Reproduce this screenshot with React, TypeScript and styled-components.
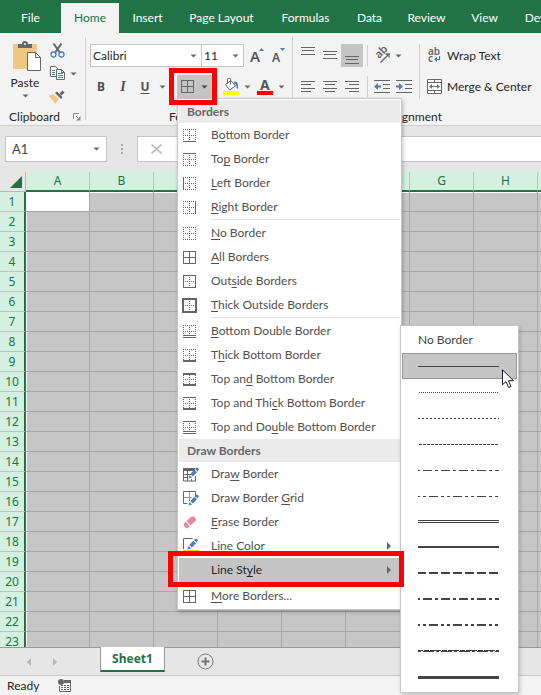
import React, { ReactNode } from "react";
import styled, { createGlobalStyle, css } from "styled-components";

const green = "#217346";
const ink = "#666666";
const blue = "#4a7ebb";

const GlobalStyle = createGlobalStyle`
  *, *::before, *::after { box-sizing: border-box; }
  body { margin: 0; overflow: hidden; }
  body, button, input, select {
    font-family: Lato, "Open Sans", sans-serif;
    font-size: 12px;
    line-height: 16px;
    color: #262626;
  }
  button, input, select { border: 0; margin: 0; padding: 0; background: transparent; outline: 0; }
  svg { display: block; flex: none; }
`;

const Window = styled.div`
  display: flex;
  flex-direction: column;
  height: 100vh;
  overflow: hidden;
  background: #e6e6e6;
`;

/* Tabs */

const TabStrip = styled.nav`
  display: flex;
  flex: none;
  height: 33px;
  padding-top: 3px;
  overflow: hidden;
  background: ${green};
`;

const RibbonTab = styled.button<{ $width: number; $active?: boolean }>`
  flex: none;
  width: ${(p) => p.$width}px;
  white-space: nowrap;
  color: ${(p) => (p.$active ? green : "#ffffff")};
  background: ${(p) => (p.$active ? "#f3f3f3" : "transparent")};
`;

/* Ribbon */

const Ribbon = styled.div`
  display: flex;
  flex: none;
  height: 93px;
  background: #f3f3f3;
  border-bottom: 1px solid #cfcfcf;
`;

const Group = styled.section<{ $width: number; $top?: number }>`
  position: relative;
  display: flex;
  flex: none;
  flex-direction: column;
  width: ${(p) => p.$width}px;
  padding: ${(p) => p.$top ?? 11}px 4px 0;
`;

const GroupDivider = styled.div`
  flex: none;
  width: 1px;
  margin: 4px 0 5px;
  background: #d2d2d2;
`;

const GroupFooter = styled.div`
  display: flex;
  align-items: center;
  height: 16px;
  margin-top: auto;
`;

const GroupTitle = styled.span`
  flex: 1;
  text-align: center;
`;

const Rows = styled.div`
  display: flex;
  flex-direction: column;
  gap: 8px;
`;

const Row = styled.div`
  display: flex;
  align-items: center;
  height: 23px;
`;

const Columns = styled.div`
  display: flex;
`;

const ToolButton = styled.button<{ $width?: number; $gap?: number; $pressed?: boolean }>`
  display: flex;
  flex: none;
  align-items: center;
  justify-content: center;
  gap: ${(p) => p.$gap ?? 4}px;
  width: ${(p) => p.$width ?? 22}px;
  height: 23px;
  background: ${(p) => (p.$pressed ? "#c5c5c5" : "transparent")};
`;

const Glyph = styled.span<{ $kind: "bold" | "italic" | "underline" }>`
  color: #505050;
  font-family: "Noto Sans", sans-serif;
  font-size: 12px;
  font-weight: 700;
  ${(p) =>
    p.$kind === "italic" &&
    css`
      font-family: "Liberation Serif", serif;
      font-style: italic;
      font-size: 14px;
    `}
  ${(p) =>
    p.$kind === "underline" &&
    css`
      text-decoration: underline;
      text-underline-offset: 2px;
    `}
`;

const LabelButton = styled.button`
  display: flex;
  align-items: center;
  gap: 5px;
  height: 23px;
  padding: 0 4px;
  white-space: nowrap;
`;

const PasteButton = styled.button`
  display: flex;
  flex-direction: column;
  align-items: center;
  width: 42px;
  gap: 3px;
`;

const ClipboardTools = styled.div`
  display: flex;
  flex-direction: column;
  align-items: flex-start;
  margin-top: -2px;
`;

const Combo = styled.label<{ $width: number }>`
  position: relative;
  display: block;
  flex: none;
  width: ${(p) => p.$width}px;
  height: 23px;
  border: 1px solid #c6c6c6;
  background: #ffffff;
  & + & { margin-left: -1px; }
`;

const ComboSelect = styled.select`
  appearance: none;
  display: block;
  width: 100%;
  height: 21px;
  padding: 0 18px 0 2px;
`;

const ComboCaret = styled.span`
  position: absolute;
  right: 4px;
  top: 9px;
  pointer-events: none;
`;

const Spacer = styled.span<{ $width: number }>`
  flex: none;
  width: ${(p) => p.$width}px;
`;

const Divider = styled.span<{ $height: number }>`
  flex: none;
  width: 1px;
  height: ${(p) => p.$height}px;
  margin: 0 3px 0 4px;
  background: #d2d2d2;
`;

const MenuAnchor = styled.div`
  position: relative;
  z-index: 5;
`;

const Callout = styled.span<{ $inset: string }>`
  position: absolute;
  inset: ${(p) => p.$inset};
  z-index: 3;
  border: 5px solid #ff0000;
  pointer-events: none;
`;

/* Menus */

const Menu = styled.div`
  position: absolute;
  top: 100%;
  left: 0;
  z-index: 1;
  width: 225px;
  padding: 1px;
  background: #ffffff;
  border: 1px solid #c6c6c6;
  box-shadow: 1px 2px 4px rgba(0, 0, 0, 0.25);
`;

const MenuHeader = styled.div`
  height: 23px;
  padding: 0 8px;
  line-height: 23px;
  font-weight: 700;
  color: ${ink};
  background: #ebebeb;
`;

const MenuItem = styled.button<{ $active?: boolean }>`
  display: flex;
  align-items: center;
  width: 100%;
  height: 24px;
  padding: 0 9px 0 4px;
  text-align: left;
  white-space: nowrap;
  color: ${(p) => (p.$active ? "#262626" : "#505050")};
  background: ${(p) => (p.$active ? "#c5c5c5" : "transparent")};
  & u { text-underline-offset: 2px; }
`;

const MenuIcon = styled.span`
  flex: none;
  width: 28px;
`;

const MenuText = styled.span`
  flex: 1;
`;

const MenuSeparator = styled.div`
  height: 2px;
  margin-left: 32px;
  border-top: 1px solid #dfe1e3;
`;

const SubmenuAnchor = styled.div`
  position: relative;
`;

const Submenu = styled.div`
  position: absolute;
  left: 100%;
  bottom: -111px;
  z-index: 2;
  width: 119px;
  padding: 1px;
  background: #ffffff;
  border: 1px solid #c6c6c6;
  box-shadow: 1px 2px 4px rgba(0, 0, 0, 0.2);
`;

const StyleOption = styled.button<{ $active?: boolean }>`
  display: flex;
  align-items: center;
  width: 115px;
  height: 26px;
  padding: 0 15px;
  color: #444444;
  border: 1px solid ${(p) => (p.$active ? "#969696" : "transparent")};
  background: ${(p) => (p.$active ? "#c5c5c5" : "transparent")};
`;

const Pointer = styled.span`
  position: absolute;
  left: 101px;
  top: 43px;
  pointer-events: none;
`;

/* Formula bar */

const FormulaBar = styled.div`
  display: flex;
  flex: none;
  align-items: center;
  height: 46px;
  padding: 0 0 0 5px;
`;

const NameBox = styled.label`
  display: flex;
  align-items: center;
  width: 102px;
  height: 26px;
  padding: 0 6px;
  border: 1px solid #c6c6c6;
  background: #ffffff;
`;

const NameInput = styled.input`
  flex: 1;
  min-width: 0;
  font-size: 13px;
  color: #444444;
`;

const FormulaGrip = styled.span`
  display: flex;
  justify-content: center;
  width: 30px;
`;

const FormulaBox = styled.div`
  display: flex;
  flex: 1;
  align-items: center;
  height: 26px;
  padding: 0 13px;
  border: 1px solid #c6c6c6;
  border-right: 0;
  background: #ffffff;
`;

const FormulaInput = styled.input`
  flex: 1;
  min-width: 0;
  margin-left: 80px;
`;

/* Sheet */

const SheetArea = styled.main`
  flex: 1 1 0;
  min-height: 0;
  overflow: hidden;
`;

const Grid = styled.table`
  table-layout: fixed;
  width: 1690px;
  border-collapse: separate;
  border-spacing: 0;
  font-family: "Noto Sans", sans-serif;
  & tr { height: 20px; }
`;

const HeadColumn = styled.col`
  width: 26px;
`;

const Corner = styled.td`
  padding: 0 0 0 10px;
  border-right: 1px solid #b8b8b8;
  border-bottom: 1px solid #b8b8b8;
`;

const ColumnHead = styled.th`
  height: 20px;
  padding: 0;
  line-height: 18px;
  font-weight: 400;
  color: ${green};
  background: #d3f0e0;
  border-right: 1px solid #bcc2be;
  border-bottom: 2px solid ${green};
`;

const RowHead = styled.th`
  height: 20px;
  padding: 0;
  line-height: 18px;
  font-weight: 400;
  color: ${green};
  background: #d3f0e0;
  border-right: 2px solid ${green};
  border-bottom: 1px solid #bcc2be;
`;

const Cell = styled.td<{ $current?: boolean; $top?: boolean; $left?: boolean }>`
  padding: 0;
  background: ${(p) => (p.$current ? "#ffffff" : "#c6c6c6")};
  border-right: 1px solid #a6a6a6;
  border-bottom: 1px solid #a6a6a6;
  box-shadow: ${(p) =>
    [p.$top && "inset 0 1px 0 #ffffff", p.$left && "inset 1px 0 0 #ffffff"].filter(Boolean).join(", ") || "none"};
`;

const SheetBar = styled.div`
  display: flex;
  flex: none;
  height: 29px;
  border-top: 1px solid #999999;
  border-bottom: 1px solid #c6c6c6;
`;

const SheetNav = styled.div`
  display: flex;
  align-items: center;
  gap: 22px;
  width: 100px;
  padding-left: 26px;
`;

const SheetTab = styled.button`
  width: 65px;
  height: 25px;
  margin-top: -1px;
  font-family: "Noto Sans", sans-serif;
  font-weight: 700;
  color: ${green};
  background: #ffffff;
  border: 1px solid #999999;
  border-width: 0 1px 2px;
  border-bottom-color: ${green};
`;

const AddSheet = styled.button`
  margin-left: 32px;
`;

const StatusBar = styled.footer`
  display: flex;
  flex: none;
  align-items: center;
  height: 19px;
  gap: 20px;
  padding: 0 7px;
  background: #f3f3f3;
`;

const StatusText = styled.span`
  width: 31px;
`;

/* Icons */

const Caret = ({ color = ink }: { color?: string }) => (
  <svg width="7" height="4" viewBox="0 0 7 4" aria-hidden="true">
    <path d="M0.500 0.500h6L3.500 3.500z" fill={color} />
  </svg>
);

type Edge = "dot" | "line" | "thick" | "double";

const dash = (e: Edge) => (e === "dot" ? "1 1" : undefined);

const BorderIcon = ({
  t = "dot",
  b = "dot",
  l = "dot",
  r = "dot",
  c = "dot",
}: {
  t?: Edge;
  b?: Edge;
  l?: Edge;
  r?: Edge;
  c?: Edge;
}) => (
  <svg width="13" height="13" viewBox="0 0 13 13" overflow="visible" shapeRendering="crispEdges" stroke={ink} fill="none" aria-hidden="true">
    <path d="M0 6.500h13M6.500 0v13" strokeDasharray={dash(c)} />
    <path d="M0.500 0v13" strokeDasharray={dash(l)} />
    <path d="M12.500 0v13" strokeDasharray={dash(r)} />
    <path d="M0 0.500h13" strokeDasharray={dash(t)} />
    {b === "double" ? (
      <>
        <path d="M0 9.500h13" stroke="#ffffff" />
        <path d="M0 11.500h13" stroke="#ffffff" />
        <path d="M0 10.500h13M0 12.500h13" />
      </>
    ) : (
      <path d="M0 12.500h13" strokeDasharray={dash(b)} />
    )}
    {t === "thick" && <path d="M0 1h13" strokeWidth="2" />}
    {b === "thick" && <path d="M0 12h13" strokeWidth="2" />}
    {l === "thick" && <path d="M0 0h13v13h-13z" strokeWidth="2" />}
  </svg>
);

const Pencil = () => (
  <>
    <path d="M5.500 13.500l1-3.600 2.600 2.600z" fill={blue} />
    <path d="M7.300 9.100l4-4.400 2.700 2.500-4.100 4.400z" fill={blue} />
    <path d="M12 4l1-1.100a1.300 1.300 0 0 1 1.900 0l.5.5a1.300 1.300 0 0 1 0 1.800l-.8 1.200z" fill={blue} />
  </>
);

const DrawBorderIcon = () => (
  <svg width="16" height="15" viewBox="0 0 16 15" aria-hidden="true">
    <path d="M0 1h12v3H0z" fill={ink} />
    <path d="M0.500 2v12h12V9M4.500 4v10M0 7.500h8M0 10.500h4M8.500 12v2" fill="none" stroke={ink} />
    <g transform="translate(0 -2)"><Pencil /></g>
  </svg>
);

const DrawGridIcon = () => (
  <svg width="16" height="15" viewBox="0 0 16 15" aria-hidden="true">
    <path d="M6.500 1v9M1 6.500h8" fill="none" stroke="#999999" />
    <path d="M4.500 12.500h-4V0.500h12V6" fill="none" stroke={ink} />
    <g transform="translate(0 1)"><Pencil /></g>
  </svg>
);

const EraserIcon = () => (
  <svg width="14" height="13" viewBox="0 0 14 13" aria-hidden="true">
    <path d="M8.500 0.500h2.500l2 2.500v1.500L7.500 9.500 3.500 5z" fill="#e8899a" />
    <path d="M2.700 5.800l4 4.400L4.500 12.200H3L0.800 9.500V7.500z" fill="#e8899a" />
  </svg>
);

const LineColorIcon = () => (
  <svg width="16" height="16" viewBox="0 0 16 16" aria-hidden="true">
    <path d="M0.500 11V0.500h9" fill="none" stroke={ink} />
    <path d="M0 12h16v2H0z" fill="#f5c518" />
    <g transform="translate(-1 -2)"><Pencil /></g>
  </svg>
);

const RightArrow = () => (
  <svg width="4" height="8" viewBox="0 0 4 8" aria-hidden="true">
    <path d="M0 0l4 4-4 4z" fill={ink} />
  </svg>
);

const ClipboardIcon = () => (
  <svg width="34" height="31" viewBox="-5 0 34 31" aria-hidden="true">
    <path d="M0 3h24v25H0z" fill="#eec880" />
    <path d="M5 7V3h4a3 3 0 0 1 6 0h4v4z" fill={ink} />
    <circle cx="12" cy="3" r="1" fill="#f3f3f3" />
    <path d="M14.500 11.500h8l5 5v13h-13z" fill="#ffffff" stroke={ink} />
    <path d="M22.500 11.500v5h5" fill="none" stroke={ink} />
  </svg>
);

const ScissorsIcon = () => (
  <svg width="15" height="15" viewBox="0 0 15 15" fill="none" aria-hidden="true">
    <path d="M3.500 0.500L9.800 9.500M11.500 0.500L5.200 9.500" stroke={ink} strokeWidth="2" />
    <circle cx="3.500" cy="11.500" r="2.500" stroke={blue} strokeWidth="1.300" />
    <circle cx="11.500" cy="11.500" r="2.500" stroke={blue} strokeWidth="1.300" />
  </svg>
);

const CopyIcon = () => (
  <svg width="16" height="15" viewBox="0 0 16 15" aria-hidden="true">
    <path d="M0.500 0.500h5l3 3v7h-8z" fill="#ffffff" stroke={ink} />
    <path d="M2 4.500h3M2 6.500h3M2 8.500h3" stroke={blue} />
    <path d="M6.500 3.500h5l3 3v7h-8z" fill="#ffffff" stroke={ink} />
    <path d="M8 7.500h5M8 9.500h5M8 11.500h5" stroke={blue} />
    <path d="M11.500 3.500v3h3" fill="none" stroke={ink} />
  </svg>
);

const BrushIcon = () => (
  <svg width="16" height="14" viewBox="0 0 16 14" aria-hidden="true">
    <path d="M0 6l4.500-2 5 5-3 5z" fill="#eec880" />
    <path d="M6 3l2-1.500 5.500 5.500-1.500 2z" fill={ink} />
    <path d="M10.500 3.500L13.500 0.500l2 2-3 3z" fill={ink} />
  </svg>
);

const FontSizeIcon = ({ size, up }: { size: number; up?: boolean }) => (
  <svg width="16" height="16" viewBox="0 0 16 16" aria-hidden="true">
    <text x="0" y="14" fontFamily="Noto Sans, sans-serif" fontSize={size} fontWeight="600" fill="#555555">A</text>
    <path d={up ? "M9 3h5l-2.500-3z" : "M8 0h5l-2.500 3z"} fill={blue} />
  </svg>
);

const BucketIcon = () => (
  <svg width="17" height="17" viewBox="0 0 17 17" aria-hidden="true">
    <path d="M2.500 6.500l5.500-4 4.500 5.500-6 4z" fill="#ffffff" stroke={ink} />
    <path d="M4.500 5.500V1.500a1.500 1.500 0 0 1 3 0v5" fill="none" stroke={ink} />
    <path d="M11.500 3.500c3 0 4 2 3.500 7.500l-1.500-1c0-3-.5-4-2.500-4.500z" fill={blue} />
    <path d="M0 13h16v4H0z" fill="#ffff00" />
  </svg>
);

const FontColorIcon = () => (
  <svg width="17" height="17" viewBox="0 0 17 17" aria-hidden="true">
    <text x="3" y="12" fontFamily="Noto Sans, sans-serif" fontSize="14" fontWeight="700" fill="#555555">A</text>
    <path d="M0 13h16v4H0z" fill="#ff0000" />
  </svg>
);

const LinesIcon = ({ lines, shift = 0 }: { lines: [number, number][]; shift?: number }) => (
  <svg width="14" height="17" viewBox="0 0 14 17" shapeRendering="crispEdges" stroke={ink} aria-hidden="true">
    {lines.map(([x, w], i) => (
      <path key={i} d={`M${x} ${shift + i * 3 + (i > 1 ? 1 : 0) + 0.5}h${w}`} />
    ))}
  </svg>
);

const OrientationIcon = () => (
  <svg width="17" height="17" viewBox="0 0 17 17" aria-hidden="true">
    <text x="0" y="0" transform="translate(5 12) rotate(-45)" fontFamily="Noto Sans, sans-serif" fontSize="11" fontWeight="600" fill={ink}>ab</text>
    <path d="M6.500 15.500L14.500 7.500M11.500 7h3.500v3.500" fill="none" stroke={ink} strokeWidth="1.300" />
  </svg>
);

const IndentIcon = ({ out }: { out?: boolean }) => (
  <svg width="17" height="14" viewBox="0 0 17 14" aria-hidden="true">
    <path d="M0 0.500h16M9 4.500h7M9 8.500h7M0 12.500h16" stroke={ink} />
    <path d={out ? "M0 6.500L4 3v2.500h3v2H4V10z" : "M7 6.500L3 3v2.500H0v2h3V10z"} fill={blue} />
  </svg>
);

const WrapIcon = () => (
  <svg width="15" height="17" viewBox="0 0 15 17" aria-hidden="true">
    <text x="1" y="8" fontFamily="Noto Sans, sans-serif" fontSize="10" fontWeight="600" fill={ink}>ab</text>
    <text x="1" y="15" fontFamily="Noto Sans, sans-serif" fontSize="10" fontWeight="600" fill={ink}>c</text>
    <path d="M12.500 9v3.500H9" fill="none" stroke={blue} strokeWidth="1.200" />
    <path d="M7 12.500l3-2.500v5z" fill={blue} />
  </svg>
);

const MergeIcon = () => (
  <svg width="15" height="15" viewBox="0 0 15 15" aria-hidden="true">
    <path d="M0.500 0.500h14v14h-14zM0 3.500h15M0 11.500h15M7.500 0v3.500M7.500 11.500V15" fill="#ffffff" stroke={ink} />
    <path d="M3 7.500h9" stroke={blue} />
    <path d="M2 7.500l3-2.500v5zM13 7.500l-3-2.500v5z" fill={blue} />
  </svg>
);

const LauncherIcon = () => (
  <svg width="8" height="8" viewBox="0 0 8 8" aria-hidden="true">
    <path d="M0.500 6V0.500H6M3 3l3 3" fill="none" stroke="#8a8a8a" />
    <path d="M7.500 3v4.500H3z" fill="#8a8a8a" />
  </svg>
);

const CursorIcon = () => (
  <svg width="13" height="20" viewBox="0 0 13 20" aria-hidden="true">
    <path d="M0.500 0.800v15l3.500-3.300 2.600 6 2.400-1-2.500-5.800h5z" fill="#ffffff" stroke="#1a1a2a" />
  </svg>
);

/* Data */

const tabs: [string, number][] = [
  ["File", 61],
  ["Home", 58],
  ["Insert", 57],
  ["Page Layout", 91],
  ["Formulas", 77],
  ["Data", 51],
  ["Review", 63],
  ["View", 53],
  ["Developer", 82],
];

type Entry = { label: ReactNode; icon: ReactNode; arrow?: boolean };

const simple: Entry[] = [
  { label: <>B<u>o</u>ttom Border</>, icon: <BorderIcon b="line" /> },
  { label: <>To<u>p</u> Border</>, icon: <BorderIcon t="line" /> },
  { label: <><u>L</u>eft Border</>, icon: <BorderIcon l="line" /> },
  { label: <><u>R</u>ight Border</>, icon: <BorderIcon r="line" /> },
];

const whole: Entry[] = [
  { label: <><u>N</u>o Border</>, icon: <BorderIcon /> },
  { label: <><u>A</u>ll Borders</>, icon: <BorderIcon t="line" b="line" l="line" r="line" c="line" /> },
  { label: <>Out<u>s</u>ide Borders</>, icon: <BorderIcon t="line" b="line" l="line" r="line" /> },
  { label: <><u>T</u>hick Outside Borders</>, icon: <BorderIcon t="line" b="line" l="thick" r="line" /> },
];

const combined: Entry[] = [
  { label: <><u>B</u>ottom Double Border</>, icon: <BorderIcon b="double" /> },
  { label: <>T<u>h</u>ick Bottom Border</>, icon: <BorderIcon b="thick" /> },
  { label: <>Top an<u>d</u> Bottom Border</>, icon: <BorderIcon t="thick" b="thick" /> },
  { label: <>Top and Thi<u>c</u>k Bottom Border</>, icon: <BorderIcon t="line" b="thick" /> },
  { label: <>Top and Do<u>u</u>ble Bottom Border</>, icon: <BorderIcon t="line" b="double" /> },
];

const drawing: Entry[] = [
  { label: <>Dra<u>w</u> Border</>, icon: <DrawBorderIcon /> },
  { label: <>Draw Border <u>G</u>rid</>, icon: <DrawGridIcon /> },
  { label: <><u>E</u>rase Border</>, icon: <EraserIcon /> },
  { label: <>L<u>i</u>ne Color</>, icon: <LineColorIcon />, arrow: true },
];

type Stroke = { y: number; w: number; dash?: string; offset?: number };

const lineStyles: { name: string; strokes: Stroke[] }[] = [
  { name: "Thin", strokes: [{ y: 2.5, w: 1 }] },
  { name: "Hair", strokes: [{ y: 2.5, w: 1, dash: "1 1", offset: 1 }] },
  { name: "Dotted", strokes: [{ y: 2.5, w: 1, dash: "2 2" }] },
  { name: "Dashed", strokes: [{ y: 2.5, w: 1, dash: "3 1", offset: 3 }] },
  { name: "Dash dot", strokes: [{ y: 2.5, w: 1, dash: "3 3 9 3", offset: 1 }] },
  { name: "Dash dot dot", strokes: [{ y: 2.5, w: 1, dash: "3 3 3 3 9 3", offset: 1 }] },
  { name: "Double", strokes: [{ y: 0.5, w: 1 }, { y: 2.5, w: 1 }] },
  { name: "Medium", strokes: [{ y: 1, w: 2 }] },
  { name: "Medium dashed", strokes: [{ y: 1, w: 2, dash: "9 3", offset: 1 }] },
  { name: "Medium dash dot", strokes: [{ y: 1, w: 2, dash: "3 3 9 3", offset: 1 }] },
  { name: "Medium dash dot dot", strokes: [{ y: 1, w: 2, dash: "3 3 3 3 9 3", offset: 1 }] },
  {
    name: "Slanted dash dot",
    strokes: [
      { y: 0.5, w: 1, dash: "11 1 5 1", offset: 6 },
      { y: 1.5, w: 1, dash: "3 2 11 2" },
    ],
  },
  { name: "Thick", strokes: [{ y: 1.5, w: 3 }] },
];

const columns = Array.from({ length: 26 }, (_, i) => String.fromCharCode(65 + i));
const rows = Array.from({ length: 40 }, (_, i) => i + 1);

const Entries = ({ items }: { items: Entry[] }) => (
  <>
    {items.map((item, i) => (
      <MenuItem key={i} type="button" role="menuitem">
        <MenuIcon>{item.icon}</MenuIcon>
        <MenuText>{item.label}</MenuText>
        {item.arrow && <RightArrow />}
      </MenuItem>
    ))}
  </>
);

const LineStyleMenu = () => (
  <Submenu role="menu" aria-label="Line Style">
    <StyleOption type="button" role="menuitem">No Border</StyleOption>
    {lineStyles.map((style, i) => (
      <StyleOption key={style.name} type="button" role="menuitem" aria-label={style.name} $active={i === 0}>
        <svg width="81" height="4" viewBox="0 0 81 4" shapeRendering="crispEdges" stroke="#444444" aria-hidden="true">
          {style.strokes.map((s, n) => (
            <path key={n} d={`M0 ${s.y}h81`} strokeWidth={s.w} strokeDasharray={s.dash} strokeDashoffset={s.offset} />
          ))}
        </svg>
      </StyleOption>
    ))}
    <Pointer><CursorIcon /></Pointer>
  </Submenu>
);

const BordersMenu = () => (
  <Menu role="menu" aria-label="Borders">
    <MenuHeader>Borders</MenuHeader>
    <Entries items={simple} />
    <MenuSeparator />
    <Entries items={whole} />
    <MenuSeparator />
    <Entries items={combined} />
    <MenuHeader>Draw Borders</MenuHeader>
    <Entries items={drawing} />
    <SubmenuAnchor>
      <MenuItem type="button" role="menuitem" aria-haspopup="menu" aria-expanded="true" $active>
        <MenuIcon />
        <MenuText>Line St<u>y</u>le</MenuText>
        <RightArrow />
      </MenuItem>
      <LineStyleMenu />
      <Callout $inset="-7px -4px -5px -11px" />
    </SubmenuAnchor>
    <MenuSeparator />
    <Entries items={[{ label: <><u>M</u>ore Borders...</>, icon: <BorderIcon t="line" b="line" l="line" r="line" c="line" /> }]} />
  </Menu>
);

const ClipboardGroup = () => (
  <Group $width={85} $top={8} aria-label="Clipboard">
    <Columns>
      <PasteButton type="button">
        <ClipboardIcon />
        Paste
        <Caret />
      </PasteButton>
      <ClipboardTools>
        <ToolButton type="button" aria-label="Cut"><ScissorsIcon /></ToolButton>
        <ToolButton type="button" aria-label="Copy" $width={34}><CopyIcon /><Caret /></ToolButton>
        <ToolButton type="button" aria-label="Format Painter"><BrushIcon /></ToolButton>
      </ClipboardTools>
    </Columns>
    <GroupFooter>
      <GroupTitle>Clipboard</GroupTitle>
      <Spacer $width={8} />
      <LauncherIcon />
    </GroupFooter>
  </Group>
);

const FontGroup = () => (
  <Group $width={206} aria-label="Font">
    <Rows>
      <Row>
        <Combo $width={112}>
          <ComboSelect aria-label="Font"><option>Calibri</option></ComboSelect>
          <ComboCaret><Caret /></ComboCaret>
        </Combo>
        <Combo $width={43}>
          <ComboSelect aria-label="Font size"><option>11</option></ComboSelect>
          <ComboCaret><Caret /></ComboCaret>
        </Combo>
        <Spacer $width={3} />
        <ToolButton type="button" aria-label="Increase font size"><FontSizeIcon size={15} up /></ToolButton>
        <ToolButton type="button" aria-label="Decrease font size"><FontSizeIcon size={12} /></ToolButton>
      </Row>
      <Row>
        <ToolButton type="button"><Glyph $kind="bold">B</Glyph></ToolButton>
        <ToolButton type="button"><Glyph $kind="italic">I</Glyph></ToolButton>
        <ToolButton type="button"><Glyph $kind="underline">U</Glyph></ToolButton>
        <ToolButton type="button" aria-label="Underline styles" $width={12}><Caret /></ToolButton>
        <Spacer $width={9} />
        <MenuAnchor>
          <ToolButton type="button" aria-label="Borders" aria-haspopup="menu" aria-expanded="true" $width={35} $gap={7} $pressed>
            <BorderIcon t="line" b="line" l="line" r="line" c="line" />
            <Caret color="#444444" />
          </ToolButton>
          <BordersMenu />
          <Callout $inset="-7px -5px -7px -8px" />
        </MenuAnchor>
        <Spacer $width={8} />
        <ToolButton type="button" aria-label="Fill color" $width={34}><BucketIcon /><Caret /></ToolButton>
        <ToolButton type="button" aria-label="Font color" $width={34}><FontColorIcon /><Caret /></ToolButton>
      </Row>
    </Rows>
    <GroupFooter>
      <GroupTitle>Font</GroupTitle>
      <Spacer $width={16} />
    </GroupFooter>
  </Group>
);

const short3: [number, number][] = [[0, 14], [1, 12], [0, 14]];

const AlignmentGroup = () => (
  <Group $width={260} aria-label="Alignment">
    <Columns>
      <Rows>
        <Row>
          <ToolButton type="button" aria-label="Top align"><LinesIcon lines={short3} /></ToolButton>
          <ToolButton type="button" aria-label="Middle align"><LinesIcon lines={short3} shift={4} /></ToolButton>
          <ToolButton type="button" aria-label="Bottom align" $pressed><LinesIcon lines={short3} shift={9} /></ToolButton>
          <Divider $height={21} />
          <ToolButton type="button" aria-label="Orientation" $width={34}><OrientationIcon /><Caret /></ToolButton>
        </Row>
        <Row>
          <ToolButton type="button" aria-label="Align left"><LinesIcon lines={[[0, 14], [0, 10], [0, 14], [0, 10]]} shift={3} /></ToolButton>
          <ToolButton type="button" aria-label="Center"><LinesIcon lines={[[0, 14], [2, 10], [0, 14], [2, 10]]} shift={3} /></ToolButton>
          <ToolButton type="button" aria-label="Align right"><LinesIcon lines={[[0, 14], [4, 10], [0, 14], [4, 10]]} shift={3} /></ToolButton>
          <Divider $height={21} />
          <ToolButton type="button" aria-label="Decrease indent" $width={23}><IndentIcon out /></ToolButton>
          <ToolButton type="button" aria-label="Increase indent" $width={21}><IndentIcon /></ToolButton>
        </Row>
      </Rows>
      <Divider $height={55} />
      <Rows>
        <LabelButton type="button"><WrapIcon />Wrap Text</LabelButton>
        <LabelButton type="button"><MergeIcon />Merge &amp; Center</LabelButton>
      </Rows>
    </Columns>
    <GroupFooter>
      <GroupTitle>Alignment</GroupTitle>
      <Spacer $width={16} />
    </GroupFooter>
  </Group>
);

const Sheet = () => (
  <SheetArea>
    <Grid>
      <colgroup>
        <HeadColumn />
        {columns.map((c) => <col key={c} />)}
      </colgroup>
      <thead>
        <tr>
          <Corner>
            <svg width="12" height="12" viewBox="0 0 12 12" aria-hidden="true">
              <path d="M12 0v12H0z" fill={green} />
            </svg>
          </Corner>
          {columns.map((c) => <ColumnHead key={c} scope="col">{c}</ColumnHead>)}
        </tr>
      </thead>
      <tbody>
        {rows.map((r) => (
          <tr key={r}>
            <RowHead scope="row">{r}</RowHead>
            {columns.map((c, i) => (
              <Cell key={c} $current={r === 1 && i === 0} $top={r === 1} $left={i === 0} />
            ))}
          </tr>
        ))}
      </tbody>
    </Grid>
  </SheetArea>
);

export default function App() {
  return (
    <Window>
      <GlobalStyle />
      <TabStrip>
        {tabs.map(([label, width]) => (
          <RibbonTab key={label} type="button" $width={width} $active={label === "Home"}>{label}</RibbonTab>
        ))}
      </TabStrip>
      <Ribbon>
        <ClipboardGroup />
        <GroupDivider />
        <FontGroup />
        <GroupDivider />
        <AlignmentGroup />
      </Ribbon>
      <FormulaBar>
        <NameBox>
          <NameInput aria-label="Name box" defaultValue="A1" />
          <Caret />
        </NameBox>
        <FormulaGrip>
          <svg width="2" height="10" viewBox="0 0 2 10" fill="#a6a6a6" aria-hidden="true">
            <path d="M0 0h2v2H0zM0 4h2v2H0zM0 8h2v2H0z" />
          </svg>
        </FormulaGrip>
        <FormulaBox>
          <svg width="11" height="10" viewBox="0 0 11 10" aria-hidden="true">
            <path d="M0.500 0.500l10 9M10.500 0.500l-10 9" stroke="#bdbdbd" strokeWidth="1.700" />
          </svg>
          <FormulaInput aria-label="Formula" />
        </FormulaBox>
      </FormulaBar>
      <Sheet />
      <SheetBar>
        <SheetNav>
          <svg width="5" height="8" viewBox="0 0 5 8" aria-hidden="true"><path d="M5 0v8L1 4z" fill="#b5b5b5" /></svg>
          <svg width="5" height="8" viewBox="0 0 5 8" aria-hidden="true"><path d="M0 0v8l4-4z" fill="#b5b5b5" /></svg>
        </SheetNav>
        <SheetTab type="button">Sheet1</SheetTab>
        <AddSheet type="button" aria-label="New sheet">
          <svg width="17" height="17" viewBox="0 0 17 17" fill="none" stroke="#777777" aria-hidden="true">
            <circle cx="8.500" cy="8.500" r="7.500" />
            <path d="M8.500 4.500v8M4.500 8.500h8" strokeWidth="2" />
          </svg>
        </AddSheet>
      </SheetBar>
      <StatusBar>
        <StatusText>Ready</StatusText>
        <svg width="13" height="13" viewBox="0 0 13 13" aria-hidden="true">
          <path d="M6 1.500h6.500v11h-11V7M7 3h6" fill="none" stroke={ink} />
          <path d="M6 1h7v3H6z" fill={ink} />
          <path d="M3 6.500h8M3 8.500h8M3 10.500h8" stroke={ink} strokeDasharray="2 1" />
          <circle cx="3" cy="3" r="3" fill={ink} />
        </svg>
      </StatusBar>
    </Window>
  );
}
